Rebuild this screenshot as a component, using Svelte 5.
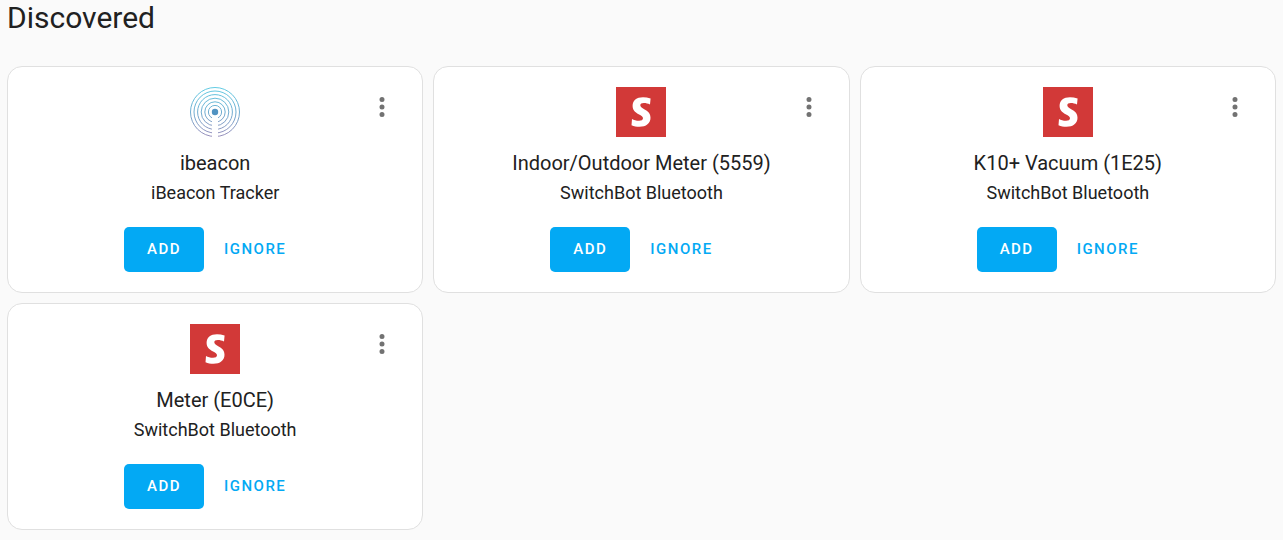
<script>
  const flows = [
    { title: 'ibeacon', integration: 'iBeacon Tracker', brand: 'ibeacon' },
    { title: 'Indoor/Outdoor Meter (5559)', integration: 'SwitchBot Bluetooth', brand: 'switchbot' },
    { title: 'K10+ Vacuum (1E25)', integration: 'SwitchBot Bluetooth', brand: 'switchbot' },
    { title: 'Meter (E0CE)', integration: 'SwitchBot Bluetooth', brand: 'switchbot' }
  ];
  const rings = [24.5, 21, 17.4, 13.8, 10.2, 6.6];
</script>

<main>
  <h1>Discovered</h1>
  <div class="grid">
    {#each flows as flow}
      <article class="card">
        {#if flow.brand === 'ibeacon'}
          <svg class="logo" viewBox="0 0 50 50" aria-hidden="true">
            <defs>
              <linearGradient id="beacon" gradientUnits="userSpaceOnUse" x1="0" y1="0" x2="0" y2="50">
                <stop offset="0" stop-color="#4fc6e0" />
                <stop offset="0.5" stop-color="#5fa3cb" />
                <stop offset="1" stop-color="#8c80b2" />
              </linearGradient>
            </defs>
            {#each rings as r}
              <circle cx="25" cy="25" {r} fill="none" stroke="url(#beacon)" stroke-width="0.9" />
            {/each}
            <rect x="22" y="27" width="6" height="23" fill="#fff" />
            <circle cx="25" cy="25" r="3.2" fill="#5193c2" />
          </svg>
        {:else}
          <svg class="logo" viewBox="0 0 50 50" aria-hidden="true">
            <rect width="50" height="50" fill="#d23938" />
            <path
              fill="#fff"
              d="M34.6 11.5C32 10.6 29.5 10.2 27 10.2C20.5 10.2 16.6 13.6 16.6 18.8C16.6 22.8 18.8 25.2 22.6 27.2C25.6 28.8 27 29.8 27 31.3C27 33 25.4 33.8 23 33.8C20.3 33.8 17.8 33 16 32L15.5 38.2C18 39.3 20.5 39.8 23.4 39.8C30.2 39.8 34.5 36.4 34.5 30.8C34.5 26.6 32.4 24.4 28.6 22.4C25.6 20.8 24.3 19.8 24.3 18.3C24.3 16.8 25.6 16.1 27.8 16.1C30 16.1 32 16.7 34 17.5Z"
            />
          </svg>
        {/if}
        <button class="menu" aria-label="Menu">
          <svg viewBox="0 0 24 24" aria-hidden="true">
            <path d="M12 16a2 2 0 0 1 2 2 2 2 0 0 1-2 2 2 2 0 0 1-2-2 2 2 0 0 1 2-2m0-6a2 2 0 0 1 2 2 2 2 0 0 1-2 2 2 2 0 0 1-2-2 2 2 0 0 1 2-2m0-6a2 2 0 0 1 2 2 2 2 0 0 1-2 2 2 2 0 0 1-2-2 2 2 0 0 1 2-2z" />
          </svg>
        </button>
        <h2>{flow.title}</h2>
        <p>{flow.integration}</p>
        <div class="actions">
          <button class="add">ADD</button>
          <button class="ignore">IGNORE</button>
        </div>
      </article>
    {/each}
  </div>
</main>

<style>
  :global(body) {
    margin: 0;
    background: #fafafa;
  }
  main {
    padding: 0 7px 10px;
    color: #212121;
    font-family: Roboto, 'Noto Sans', sans-serif;
  }
  h1,
  h2,
  p {
    margin: 0;
    font-weight: 400;
  }
  h1 {
    font-size: 30px;
    line-height: 36px;
    padding-bottom: 30px;
  }
  .grid {
    display: grid;
    grid-template-columns: repeat(3, 1fr);
    gap: 10px;
  }
  .card {
    position: relative;
    display: flex;
    flex-direction: column;
    align-items: center;
    padding: 20px;
    border: 1px solid #e0e0e0;
    border-radius: 15px;
    background: #fff;
    text-align: center;
  }
  .logo {
    display: block;
    width: 50px;
    height: 50px;
    margin-bottom: 10px;
  }
  h2 {
    font-size: 20px;
    line-height: 32px;
  }
  p {
    font-size: 18px;
    line-height: 28px;
  }
  button {
    border: 0;
    background: none;
    font-family: inherit;
    cursor: pointer;
  }
  .menu {
    position: absolute;
    top: 10px;
    right: 10px;
    display: grid;
    place-items: center;
    width: 60px;
    height: 60px;
    padding: 0;
    border-radius: 50%;
  }
  .menu svg {
    width: 30px;
    height: 30px;
    fill: #727272;
  }
  .actions {
    display: flex;
    margin-top: 20px;
  }
  .add,
  .ignore {
    min-width: 80px;
    height: 45px;
    padding: 0 20px 2px;
    border-radius: 5px;
    color: #03a9f4;
    font-size: 15px;
    font-weight: 500;
    letter-spacing: 0.1em;
  }
  .add {
    background: #03a9f4;
    color: #fff;
  }
</style>
